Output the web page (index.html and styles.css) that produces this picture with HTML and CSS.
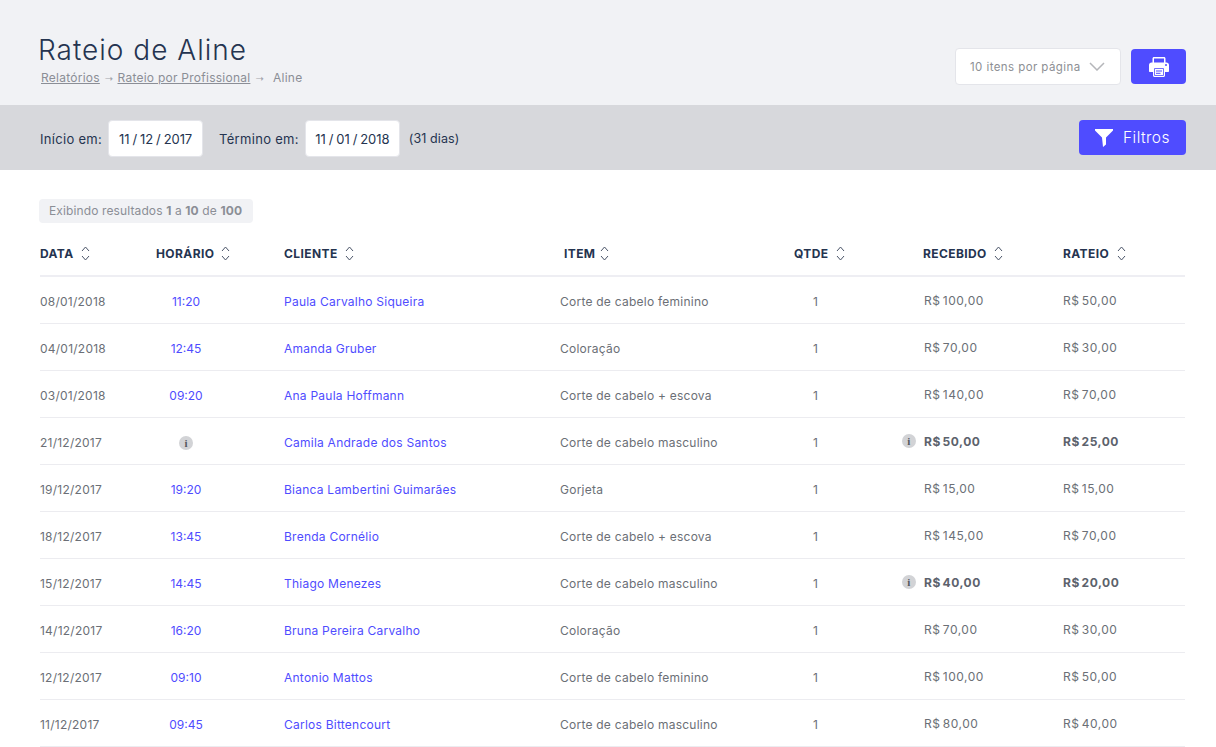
FILE: index.html
```html
<!DOCTYPE html>
<html lang="pt-BR">
<head>
    <meta charset="utf-8">
    <title>Rateio de Aline</title>
    <link rel="stylesheet" href="styles.css">
</head>
<body>
    <header class="page-header">
        <div>
            <h1>Rateio de Aline</h1>
            <div class="breadcrumb">
                <a href="#">Relatórios</a><span class="crumb-arrow">➝</span><a href="#">Rateio por Profissional</a><span class="crumb-arrow">➝</span><span class="crumb-current">Aline</span>
            </div>
        </div>
        <div class="header-actions">
            <div class="per-page">
                <span>10 itens por página</span>
                <svg width="16" height="9" viewBox="0 0 16 9"><path d="M1 1l7 7 7-7" fill="none" stroke="#b5b6ba" stroke-width="1.5"/></svg>
            </div>
            <button class="btn btn-print" aria-label="Imprimir">
                <svg width="20" height="20" viewBox="0 0 20 20">
                    <path d="M3.500 7V1.500C3.500.7 4.200 0 5 0h10c.8 0 1.500.7 1.500 1.500V7H15V1.500H5V7z" fill="#fff"/>
                    <path d="M2.500 5.500h15C18.900 5.500 20 6.600 20 8v6c0 .6-.4 1-1 1h-3v3.500c0 .8-.7 1.500-1.500 1.500h-9C4.700 20 4 19.300 4 18.500V15H1c-.6 0-1-.4-1-1V8c0-1.400 1.100-2.500 2.500-2.500z" fill="#fff"/>
                    <circle cx="17" cy="8" r="1" fill="#4f4cff"/>
                    <path d="M5.500 11.500h9v7h-9z" fill="#fff" stroke="#4f4cff" stroke-width=".8"/>
                    <path d="M7 14h6M7 16.300h4.500" stroke="#4f4cff" stroke-width="1"/>
                </svg>
            </button>
        </div>
    </header>

    <section class="filter-bar">
        <div class="date-filters">
            <label>Início em:</label>
            <div class="date-box">11 / 12 / 2017</div>
            <label class="label-end">Término em:</label>
            <div class="date-box">11 / 01 / 2018</div>
            <span class="days">(31 dias)</span>
        </div>
        <button class="btn btn-filter">
            <svg width="18" height="18" viewBox="0 0 18 18"><path d="M0 0h18v1.500L11 8.500V15.500L8 18 7 8.500 0 1.500z" fill="#fff"/></svg>
            Filtros
        </button>
    </section>

    <main class="content">
        <div class="results-badge">Exibindo resultados <b>1</b> a <b>10</b> de <b>100</b></div>

        <table class="report">
            <thead>
                <tr>
                    <th class="col-date"><span class="th-in">DATA<svg class="sort" viewBox="0 0 9 15"><path d="M1 5l3.500-4L8 5M1 10l3.500 4L8 10"/></svg></span></th>
                    <th class="col-time"><span class="th-in">HORÁRIO<svg class="sort" viewBox="0 0 9 15"><path d="M1 5l3.500-4L8 5M1 10l3.500 4L8 10"/></svg></span></th>
                    <th class="col-client"><span class="th-in">CLIENTE<svg class="sort" viewBox="0 0 9 15"><path d="M1 5l3.500-4L8 5M1 10l3.500 4L8 10"/></svg></span></th>
                    <th class="col-item"><span class="th-in">ITEM<svg class="sort" viewBox="0 0 9 15"><path d="M1 5l3.500-4L8 5M1 10l3.500 4L8 10"/></svg></span></th>
                    <th class="col-qty"><span class="th-in">QTDE<svg class="sort" viewBox="0 0 9 15"><path d="M1 5l3.500-4L8 5M1 10l3.500 4L8 10"/></svg></span></th>
                    <th class="col-received"><span class="th-in">RECEBIDO<svg class="sort" viewBox="0 0 9 15"><path d="M1 5l3.500-4L8 5M1 10l3.500 4L8 10"/></svg></span></th>
                    <th class="col-share"><span class="th-in">RATEIO<svg class="sort" viewBox="0 0 9 15"><path d="M1 5l3.500-4L8 5M1 10l3.500 4L8 10"/></svg></span></th>
                </tr>
            </thead>
            <tbody>
                <tr><td>08/01/2018</td><td class="time"><a href="#">11:20</a></td><td><a href="#">Paula Carvalho Siqueira</a></td><td>Corte de cabelo feminino</td><td class="qty">1</td><td class="money">R$ 100,00</td><td class="money">R$ 50,00</td></tr>
                <tr><td>04/01/2018</td><td class="time"><a href="#">12:45</a></td><td><a href="#">Amanda Gruber</a></td><td>Coloração</td><td class="qty">1</td><td class="money">R$ 70,00</td><td class="money">R$ 30,00</td></tr>
                <tr><td>03/01/2018</td><td class="time"><a href="#">09:20</a></td><td><a href="#">Ana Paula Hoffmann</a></td><td>Corte de cabelo + escova</td><td class="qty">1</td><td class="money">R$ 140,00</td><td class="money">R$ 70,00</td></tr>
                <tr><td>21/12/2017</td><td class="time"><span class="info">i</span></td><td><a href="#">Camila Andrade dos Santos</a></td><td>Corte de cabelo masculino</td><td class="qty">1</td><td class="money strong"><span class="info info-side">i</span>R$ 50,00</td><td class="money strong">R$ 25,00</td></tr>
                <tr><td>19/12/2017</td><td class="time"><a href="#">19:20</a></td><td><a href="#">Bianca Lambertini Guimarães</a></td><td>Gorjeta</td><td class="qty">1</td><td class="money">R$ 15,00</td><td class="money">R$ 15,00</td></tr>
                <tr><td>18/12/2017</td><td class="time"><a href="#">13:45</a></td><td><a href="#">Brenda Cornélio</a></td><td>Corte de cabelo + escova</td><td class="qty">1</td><td class="money">R$ 145,00</td><td class="money">R$ 70,00</td></tr>
                <tr><td>15/12/2017</td><td class="time"><a href="#">14:45</a></td><td><a href="#">Thiago Menezes</a></td><td>Corte de cabelo masculino</td><td class="qty">1</td><td class="money strong"><span class="info info-side">i</span>R$ 40,00</td><td class="money strong">R$ 20,00</td></tr>
                <tr><td>14/12/2017</td><td class="time"><a href="#">16:20</a></td><td><a href="#">Bruna Pereira Carvalho</a></td><td>Coloração</td><td class="qty">1</td><td class="money">R$ 70,00</td><td class="money">R$ 30,00</td></tr>
                <tr><td>12/12/2017</td><td class="time"><a href="#">09:10</a></td><td><a href="#">Antonio Mattos</a></td><td>Corte de cabelo feminino</td><td class="qty">1</td><td class="money">R$ 100,00</td><td class="money">R$ 50,00</td></tr>
                <tr><td>11/12/2017</td><td class="time"><a href="#">09:45</a></td><td><a href="#">Carlos Bittencourt</a></td><td>Corte de cabelo masculino</td><td class="qty">1</td><td class="money">R$ 80,00</td><td class="money">R$ 40,00</td></tr>
            </tbody>
        </table>
    </main>
</body>
</html>
```

FILE: styles.css
```css
* {
    box-sizing: border-box;
}

html, body {
    height: 747px;
    overflow: hidden;
}

body {
    margin: 0;
    background-color: #fff;
    color: #6b6f76;
    font-family: Inter, "Open Sans", sans-serif;
    font-size: 12px;
}

a {
    color: #4f4cff;
    text-decoration: none;
}

/* top area */
.page-header {
    height: 105px;
    padding: 33px 30px 0 38px;
    background-color: #f1f2f5;
    display: flex;
    justify-content: space-between;
}

h1 {
    margin: 0;
    color: #253450;
    font-size: 28px;
    font-weight: 300;
    line-height: 34px;
    letter-spacing: 1px;
}

.breadcrumb {
    margin: 3px 0 0 3px;
    font-size: 12px;
    line-height: 16px;
    letter-spacing: 0.25px;
    color: #8b8e96;
}

.breadcrumb a {
    color: #8b8e96;
    text-decoration: underline;
}

.crumb-arrow {
    margin: 0 4px 0 5px;
    font-size: 10px;
    color: #a5a7ad;
    font-family: "DejaVu Sans", sans-serif;
}

.crumb-current {
    margin-left: 5px;
}

.header-actions {
    display: flex;
    gap: 10px;
    padding-top: 15px;
    align-items: flex-start;
}

.per-page {
    width: 166px;
    height: 37px;
    padding: 0 15px 0 14px;
    background-color: #fff;
    border: 1px solid #e4e5ea;
    border-radius: 4px;
    color: #8d8f94;
    font-size: 11.500px;
    letter-spacing: 0.42px;
    display: flex;
    align-items: center;
    justify-content: space-between;
}

.btn {
    border: 0;
    border-radius: 4px;
    background-color: #4f4cff;
    color: #fff;
    display: flex;
    align-items: center;
    justify-content: center;
    font-family: inherit;
    padding: 0;
}

.btn-print {
    width: 55px;
    height: 35px;
    margin-top: 1px;
}

/* date filters */
.filter-bar {
    height: 65px;
    padding: 15px 30px 0 40px;
    background-color: #d7d8dc;
    display: flex;
    justify-content: space-between;
    align-items: flex-start;
}

.date-filters {
    display: flex;
    align-items: center;
    color: #253450;
    font-size: 13px;
    letter-spacing: 0.3px;
}

.date-box {
    width: 95px;
    height: 37px;
    margin-left: 6px;
    background-color: #fff;
    border: 1px solid #e4e5ea;
    border-radius: 4px;
    display: flex;
    align-items: center;
    justify-content: center;
    letter-spacing: -0.1px;
    word-spacing: -0.5px;
    white-space: nowrap;
}

.label-end {
    margin-left: 16px;
}

.days {
    margin-left: 9px;
    font-size: 12.500px;
    letter-spacing: 0.1px;
}

.btn-filter {
    width: 107px;
    height: 35px;
    gap: 10px;
    justify-content: flex-start;
    padding-left: 16px;
    font-size: 15.500px;
    font-weight: 300;
    letter-spacing: 0.45px;
}

/* results */
.content {
    padding: 29px 31px 0 40px;
}

.results-badge {
    display: inline-block;
    height: 24px;
    margin-left: -1px;
    padding: 0 11px 0 10px;
    background-color: #f1f2f5;
    border-radius: 4px;
    color: #8b8e96;
    font-size: 12px;
    line-height: 24px;
    letter-spacing: 0.12px;
}

.results-badge b {
    font-weight: 700;
}

.report {
    width: 1145px;
    margin-top: 7px;
    border-collapse: collapse;
    table-layout: fixed;
}

.col-date { width: 116px; }
.col-time { width: 128px; }
.col-client { width: 276px; }
.col-item { width: 230px; }
.col-qty { width: 129px; }
.col-received { width: 140px; }

th {
    height: 46px;
    padding: 2px 0 0;
    border-bottom: 2px solid #eeeef3;
    color: #253450;
    font-size: 12px;
    font-weight: 700;
    letter-spacing: 0.4px;
    text-align: left;
}

.th-in {
    display: inline-flex;
    align-items: center;
    gap: 7px;
}

.col-item .th-in,
.col-qty .th-in,
.col-received .th-in,
.col-share .th-in {
    margin-left: 4px;
}

.col-item .th-in {
    gap: 5px;
}

.col-share .th-in {
    gap: 8px;
}

.sort {
    width: 9px;
    height: 15px;
    fill: none;
    stroke: #4a5468;
    stroke-width: 1;
}

td {
    height: 47px;
    padding: 4px 0 0;
    border-bottom: 1px solid #ececf0;
    font-size: 12px;
    letter-spacing: 0.24px;
    color: #6b6f76;
    white-space: nowrap;
}

td.time {
    padding-right: 68px;
    text-align: center;
    letter-spacing: 0;
}

td.qty {
    padding-left: 23px;
}

td.money {
    position: relative;
    padding: 2px 0 0 4px;
    letter-spacing: 0.5px;
    word-spacing: -1.500px;
}

td.money:nth-child(6) {
    padding-left: 5px;
}

.strong {
    font-weight: 700;
    color: #5c626c;
}

.info {
    display: inline-block;
    width: 14px;
    height: 14px;
    border-radius: 50%;
    background-color: #d2d3d6;
    color: #55585e;
    font-family: "Liberation Serif", serif;
    font-size: 11px;
    font-weight: 700;
    line-height: 14px;
    text-align: center;
    vertical-align: middle;
}

.info-side {
    position: absolute;
    left: -17px;
    top: 16px;
}
```
